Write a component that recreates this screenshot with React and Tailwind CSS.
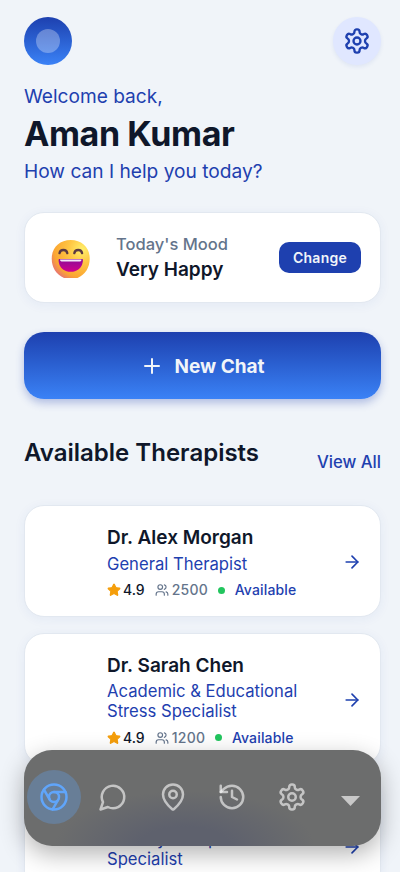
import React from 'react';
import { ArrowRight, Chromium, History, MapPin, Plus, Star, Users } from 'lucide-react';

const therapists = [
  { name: 'Dr. Alex Morgan', specialty: 'General Therapist', rating: '4.9', patients: '2500' },
  { name: 'Dr. Sarah Chen', specialty: 'Academic & Educational Stress Specialist', rating: '4.9', patients: '1200' },
  { name: 'Dr. Michael Lee', specialty: 'Anxiety & Depression Specialist', rating: '4.8', patients: '1800' },
];

const SettingsIcon = ({ size }) => (
  <svg width={size} height={size} viewBox="0 0 24 24" fill="none" stroke="currentColor" strokeWidth="2" strokeLinecap="round" strokeLinejoin="round">
    <path d="M12.22 2h-.44a2 2 0 0 0-2 2v.18a2 2 0 0 1-1 1.73l-.43.25a2 2 0 0 1-2 0l-.15-.08a2 2 0 0 0-2.73.73l-.22.38a2 2 0 0 0 .73 2.73l.15.1a2 2 0 0 1 1 1.72v.51a2 2 0 0 1-1 1.74l-.15.09a2 2 0 0 0-.73 2.73l.22.38a2 2 0 0 0 2.73.73l.15-.08a2 2 0 0 1 2 0l.43.25a2 2 0 0 1 1 1.73V20a2 2 0 0 0 2 2h.44a2 2 0 0 0 2-2v-.18a2 2 0 0 1 1-1.73l.43-.25a2 2 0 0 1 2 0l.15.08a2 2 0 0 0 2.73-.73l.22-.39a2 2 0 0 0-.73-2.73l-.15-.08a2 2 0 0 1-1-1.74v-.5a2 2 0 0 1 1-1.74l.15-.09a2 2 0 0 0 .73-2.73l-.22-.38a2 2 0 0 0-2.73-.73l-.15.08a2 2 0 0 1-2 0l-.43-.25a2 2 0 0 1-1-1.73V4a2 2 0 0 0-2-2z" />
    <circle cx="12" cy="12" r="3" />
  </svg>
);

const ChatIcon = ({ size }) => (
  <svg width={size} height={size} viewBox="0 0 24 24" fill="none" stroke="currentColor" strokeWidth="2" strokeLinecap="round" strokeLinejoin="round">
    <path d="M7.900 20A9 9 0 1 0 4 16.100L2 22Z" />
  </svg>
);

const navItems = [
  { label: 'Home', icon: Chromium },
  { label: 'Chat', icon: ChatIcon },
  { label: 'Nearby', icon: MapPin },
  { label: 'History', icon: History },
  { label: 'Settings', icon: SettingsIcon },
];

const HappyFace = () => (
  <svg viewBox="0 0 40 40" className="mt-[3px] h-10 w-10">
    <defs>
      <radialGradient id="face" cx="0.8" cy="0.25" r="0.98">
        <stop offset="0" stopColor="#fff06c" />
        <stop offset="0.35" stopColor="#ffc744" />
        <stop offset="0.75" stopColor="#fba632" />
        <stop offset="1" stopColor="#e0608a" />
      </radialGradient>
      <linearGradient id="mouth" x1="0" y1="0" x2="0" y2="1">
        <stop offset="0" stopColor="#8c0c98" />
        <stop offset="1" stopColor="#d0018c" />
      </linearGradient>
    </defs>
    <path d="M20.700 1C32 1 39.700 8.800 39.700 19.500c0 9-4.500 16.300-12.200 19.500H14C6.300 35.800 1.700 28.500 1.700 19.500 1.700 8.800 9.500 1 20.700 1z" fill="url(#face)" />
    <path d="M9.500 14.200c.8-4.300 7-4.300 7.800 0M24.300 14.200c.8-4.300 7-4.300 7.800 0" fill="none" stroke="#5b3942" strokeWidth="2.300" strokeLinecap="round" />
    <path d="M9 20h23.500c1 0 .8 12.800-11.800 12.800S8 20 9 20z" fill="url(#mouth)" />
    <path d="M10 20.500h21.500q0 2-1.500 2H11.500q-1.500 0-1.500-2z" fill="#f3eaf8" />
  </svg>
);

const TherapistCard = ({ therapist }) => (
  <div className="flex items-center rounded-[20px] border border-[#e2e8f0] bg-white pt-[18px] pr-[18px] pb-4 pl-[82px] shadow-[0_2px_12px_rgba(30,64,175,0.06)]">
    <div className="w-[206px]">
      <h3 className="text-[19px] leading-[27px] font-semibold text-[#0f172a]">{therapist.name}</h3>
      <p className="mt-[3.500px] text-[16.650px] leading-[19.800px] text-[#1e40af]">{therapist.specialty}</p>
      <div className="mt-1.5 flex h-5 items-center text-sm">
        <Star size={14} fill="#f59e0b" color="#f59e0b" />
        <span className="ml-0.5 font-medium text-[#0f172a]">{therapist.rating}</span>
        <Users size={14} className="ml-2.5 text-[#64748b]" />
        <span className="ml-[3px] font-medium tracking-[0.300px] text-[#64748b]">{therapist.patients}</span>
        <span className="ml-[9.500px] h-[7px] w-[7px] rounded-full bg-[#22c55e]" />
        <span className="ml-[10px] font-medium tracking-[0.150px] text-[#1e40af]">Available</span>
      </div>
    </div>
    <ArrowRight size={20} className="ml-auto text-[#1e40af]" />
  </div>
);

const App = () => {
  return (
    <div className="relative h-[872px] w-full overflow-hidden bg-[#f0f4f9] font-[Inter,sans-serif] text-[#0f172a]">
      <div className="pt-[17px] pr-[19px] pl-6">
        {/* Header */}
        <header className="flex items-center justify-between">
          <div className="flex h-12 w-12 items-center justify-center rounded-full bg-linear-to-b from-[#1e40af] to-[#3b82f6]">
            <div className="h-6 w-6 rounded-full bg-white/30" />
          </div>
          <button className="flex h-12 w-12 items-center justify-center rounded-full bg-[#e0e7ff] text-[#1e40af] shadow-[0_2px_4px_rgba(30,64,175,0.08)]">
            <SettingsIcon size={28} />
          </button>
        </header>

        <p className="mt-[17px] text-[19.100px] leading-7 text-[#1e40af]">Welcome back,</p>
        <h1 className="mt-px text-[34px] leading-[45px] font-bold tracking-[-0.400px]">Aman Kumar</h1>
        <p className="mt-px text-[19.150px] leading-7 text-[#1e40af]">How can I help you today?</p>

        {/* Mood */}
        <section className="mt-[27px] flex h-[91px] items-center rounded-[20px] border border-[#e2e8f0] bg-white pr-[19px] pl-[25px] shadow-[0_2px_12px_rgba(30,64,175,0.06)]">
          <HappyFace />
          <div className="ml-[26px]">
            <p className="text-[16.500px] leading-6 font-medium text-[#64748b]">Today's Mood</p>
            <p className="text-[19px] leading-[27px] font-semibold">Very Happy</p>
          </div>
          <button className="ml-auto h-[31px] w-[82px] rounded-[10px] bg-[#1e40af] text-sm font-semibold tracking-[0.250px] text-[#f1f5f9]">Change</button>
        </section>

        <button className="mt-[29px] flex h-[67px] w-full items-center justify-center gap-[10px] rounded-[20px] bg-linear-to-b from-[#1e40af] to-[#3b82f6] text-[19px] font-bold text-[#f1f5f9] shadow-[0_4px_8px_rgba(30,64,175,0.3)]">
          <Plus size={24} />
          <span className="pt-[3px]">New Chat</span>
        </button>

        {/* Therapists */}
        <div className="mt-[36px] flex h-[40px] items-start justify-between">
          <h2 className="text-2xl leading-9 font-semibold">Available Therapists</h2>
          <span className="mt-[15px] text-[16.700px] leading-6 font-medium text-[#1e40af]">View All</span>
        </div>
        <div className="mt-[30px] flex flex-col gap-[15.500px]">
          {therapists.map((therapist) => (
            <TherapistCard key={therapist.name} therapist={therapist} />
          ))}
        </div>
      </div>

      {/* Bottom navigation floats over the list */}
      <nav className="absolute top-[750px] right-[19px] left-6 flex h-24 items-center rounded-[28px] bg-[#6c6d6d] bg-[radial-gradient(ellipse_130px_55px_at_45%_100%,#5e616d_0%,#5e616d_35%,transparent_100%)] pb-0.5 pl-[3px] shadow-[0_8px_24px_rgba(0,0,0,0.3)]">
        {navItems.map(({ label, icon: Icon }, index) => (
          <button
            key={label}
            aria-label={label}
            className={`mr-[5.400px] flex h-[54px] w-[54px] items-center justify-center rounded-full ${index === 0 ? 'bg-[#60a5fa]/30 text-[#60a5fa]' : 'text-white/60'}`}
          >
            <Icon size={30} />
          </button>
        ))}
        <svg viewBox="0 0 20 10" className="mt-2 ml-[17px] h-2.5 w-[19px]" preserveAspectRatio="none" fill="#c8c8c8">
          <path d="M0 0h20L10 10z" />
        </svg>
      </nav>
    </div>
  );
};

export default App;
